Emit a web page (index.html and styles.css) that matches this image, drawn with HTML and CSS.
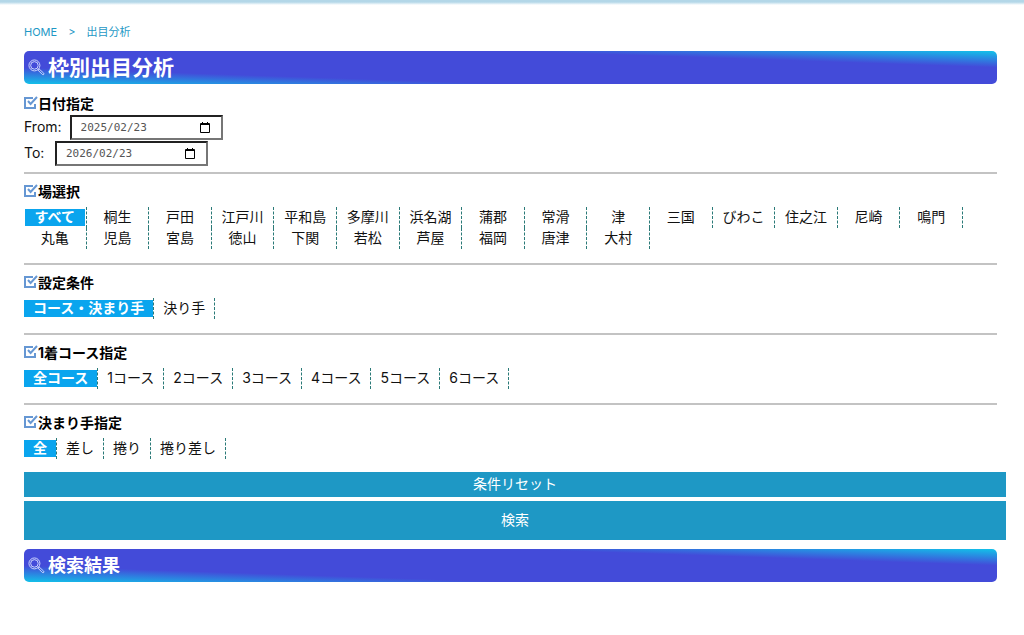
FILE: index.html
```
<!DOCTYPE html>
<html lang="ja">
<head>
  <meta charset="UTF-8" />
  <meta name="viewport" content="width=device-width, initial-scale=1" />
  <title>枠別出目分析</title>
  <link rel="stylesheet" href="styles.css">
</head>
<body>

  <svg class="sprite" aria-hidden="true">
    <symbol id="icon-search" viewBox="0 0 18 18">
      <circle cx="6.8" cy="6.8" r="5.8" />
      <circle cx="6.8" cy="6.8" r="4" />
      <path d="M10.4 11.6l1.2-1.2 5 4.6q.6.8 0 1.4t-1.4 0z" />
    </symbol>
    <symbol id="icon-check" viewBox="0 0 14 14">
      <path d="M9 2H1v10h10V8" />
      <path d="M4 5l2.6 3L13 1" />
    </symbol>
    <symbol id="icon-calendar" viewBox="0 0 10 11">
      <path d="M.5 1.5h9v9h-9z" />
      <path d="M0 2.5h10M2.5 0v2M7.5 0v2" />
    </symbol>
  </svg>

  <div class="top-line"></div>

  <main class="container">
    <nav class="breadcrumb">
      <a href="#">HOME</a>
      <span>&gt;</span>
      <a href="#">出目分析</a>
    </nav>

    <h1 class="banner"><svg class="search-icon"><use href="#icon-search" /></svg>枠別出目分析</h1>

    <form>
      <section>
        <h3 class="section-title"><svg class="check-icon"><use href="#icon-check" /></svg>日付指定</h3>
        <div class="date-row">
          <label for="from">From:</label>
          <div class="date-box">
            <input type="text" id="from" value="2025/02/23">
            <button type="button" class="calendar-button" aria-label="From"><svg><use href="#icon-calendar" /></svg></button>
          </div>
        </div>
        <div class="date-row">
          <label for="to">To:</label>
          <div class="date-box">
            <input type="text" id="to" value="2026/02/23">
            <button type="button" class="calendar-button" aria-label="To"><svg><use href="#icon-calendar" /></svg></button>
          </div>
        </div>
      </section>
      <hr>

      <section>
        <h3 class="section-title"><svg class="check-icon"><use href="#icon-check" /></svg>場選択</h3>
        <div class="options place-list">
          <label><input type="radio" name="place" checked><span>すべて</span></label>
          <label><input type="radio" name="place"><span>桐生</span></label>
          <label><input type="radio" name="place"><span>戸田</span></label>
          <label><input type="radio" name="place"><span>江戸川</span></label>
          <label><input type="radio" name="place"><span>平和島</span></label>
          <label><input type="radio" name="place"><span>多摩川</span></label>
          <label><input type="radio" name="place"><span>浜名湖</span></label>
          <label><input type="radio" name="place"><span>蒲郡</span></label>
          <label><input type="radio" name="place"><span>常滑</span></label>
          <label><input type="radio" name="place"><span>津</span></label>
          <label><input type="radio" name="place"><span>三国</span></label>
          <label><input type="radio" name="place"><span>びわこ</span></label>
          <label><input type="radio" name="place"><span>住之江</span></label>
          <label><input type="radio" name="place"><span>尼崎</span></label>
          <label><input type="radio" name="place"><span>鳴門</span></label>
          <label><input type="radio" name="place"><span>丸亀</span></label>
          <label><input type="radio" name="place"><span>児島</span></label>
          <label><input type="radio" name="place"><span>宮島</span></label>
          <label><input type="radio" name="place"><span>徳山</span></label>
          <label><input type="radio" name="place"><span>下関</span></label>
          <label><input type="radio" name="place"><span>若松</span></label>
          <label><input type="radio" name="place"><span>芦屋</span></label>
          <label><input type="radio" name="place"><span>福岡</span></label>
          <label><input type="radio" name="place"><span>唐津</span></label>
          <label><input type="radio" name="place"><span>大村</span></label>
        </div>
      </section>
      <hr>

      <section>
        <h3 class="section-title"><svg class="check-icon"><use href="#icon-check" /></svg>設定条件</h3>
        <div class="options">
          <label><input type="radio" name="cond" checked><span>コース・決まり手</span></label>
          <label><input type="radio" name="cond"><span>決り手</span></label>
        </div>
      </section>
      <hr>

      <section>
        <h3 class="section-title"><svg class="check-icon"><use href="#icon-check" /></svg>1着コース指定</h3>
        <div class="options">
          <label><input type="radio" name="course" checked><span>全コース</span></label>
          <label><input type="radio" name="course"><span>1コース</span></label>
          <label><input type="radio" name="course"><span>2コース</span></label>
          <label><input type="radio" name="course"><span>3コース</span></label>
          <label><input type="radio" name="course"><span>4コース</span></label>
          <label><input type="radio" name="course"><span>5コース</span></label>
          <label><input type="radio" name="course"><span>6コース</span></label>
        </div>
      </section>
      <hr>

      <section>
        <h3 class="section-title"><svg class="check-icon"><use href="#icon-check" /></svg>決まり手指定</h3>
        <div class="options">
          <label><input type="radio" name="kimarite" checked><span>全</span></label>
          <label><input type="radio" name="kimarite"><span>差し</span></label>
          <label><input type="radio" name="kimarite"><span>捲り</span></label>
          <label><input type="radio" name="kimarite"><span>捲り差し</span></label>
        </div>
      </section>

      <div class="buttons">
        <button type="reset" class="reset-button">条件リセット</button>
        <button type="submit" class="search-button">検索</button>
      </div>
    </form>

    <h2 class="banner"><svg class="search-icon"><use href="#icon-search" /></svg>検索結果</h2>
  </main>

</body>
</html>
```
FILE: styles.css
```
* {
  box-sizing: border-box;
}

body {
  margin: 0;
  background: #fff;
  color: #111;
  font-family: Inter, "Noto Sans CJK JP", sans-serif;
  font-size: 14px;
  line-height: 20px;
}

.sprite {
  display: none;
}

.top-line {
  height: 5px;
  background: linear-gradient(#b3d7e8 40%, #fff);
}

.container {
  padding: 17px 27px 0 24px;
}

.breadcrumb {
  display: flex;
  gap: 11px;
  margin-bottom: 9px;
  font-size: 11px;
  color: #1e98c5;
}

.breadcrumb a {
  color: #1e98c5;
  text-decoration: none;
}

/* Headings */
.banner {
  display: flex;
  align-items: center;
  gap: 3px;
  height: 33px;
  margin: 0;
  padding-left: 4px;
  border-radius: 5px;
  background: linear-gradient(to top right, #12c2e9, #434bd9 25%, #434bd9 75%, #12c2e9);
  color: #fff;
  font-size: 18px;
}

h1.banner {
  font-size: 21px;
}

.search-icon {
  width: 17px;
  height: 17px;
  fill: none;
  stroke: #d5dcff;
  stroke-width: 1;
}

.section-title {
  display: flex;
  align-items: center;
  margin: 0;
  color: #000;
  font-size: 14px;
}

.check-icon {
  width: 14px;
  height: 14px;
  margin-bottom: 2px;
  fill: none;
  stroke: #6697d3;
  stroke-width: 2;
}

hr {
  height: 2px;
  margin: 14px 0 8px;
  border: 0;
  background: #c3c3c3;
}

/* Dates */
form {
  padding-top: 10px;
}

.date-row {
  display: flex;
  align-items: flex-start;
  gap: 8px;
  margin-top: 1px;
}

.date-row label {
  min-width: 23px;
  line-height: 23px;
}

.date-box {
  display: flex;
  align-items: center;
  width: 153px;
  height: 25px;
  padding: 0 11px 0 9px;
  border: 2px inset #767676;
}

.date-box input {
  flex: 1;
  min-width: 0;
  padding: 0;
  border: 0;
  background: none;
  color: #555;
  font: 11px "DejaVu Sans Mono", monospace;
}

.calendar-button {
  display: flex;
  padding: 0;
  border: 0;
  background: none;
}

.calendar-button svg {
  width: 10px;
  height: 11px;
  fill: none;
  stroke: #000;
  stroke-width: 1;
}

section:first-child + hr {
  margin-top: 6px;
}

/* Option lists */
.options {
  display: flex;
  margin-top: 5px;
}

.place-list {
  display: grid;
  grid-template-columns: repeat(15, 1fr);
  padding-right: 34px;
}

.options label {
  height: 21px;
  padding: 2px 0;
  border-right: 1px dashed #2b7a78;
  text-align: center;
  cursor: pointer;
}

.options input {
  position: absolute;
  opacity: 0;
}

.options span {
  display: block;
  padding: 0 9px 2px;
  line-height: 15px;
}

.place-list span {
  margin: 0 1px;
  padding: 0 0 2px;
}

.options input:checked + span {
  background: #0aa5ee;
  color: #fff;
  font-weight: bold;
}

/* Buttons */
.buttons {
  display: flex;
  flex-direction: column;
  gap: 4px;
  margin: 13px -9px 9px 0;
}

.buttons button {
  height: 25px;
  padding: 0 0 2px;
  border: 0;
  background: #1e98c5;
  color: #fff;
  font: inherit;
  cursor: pointer;
}

.buttons .search-button {
  height: 39px;
}
```
